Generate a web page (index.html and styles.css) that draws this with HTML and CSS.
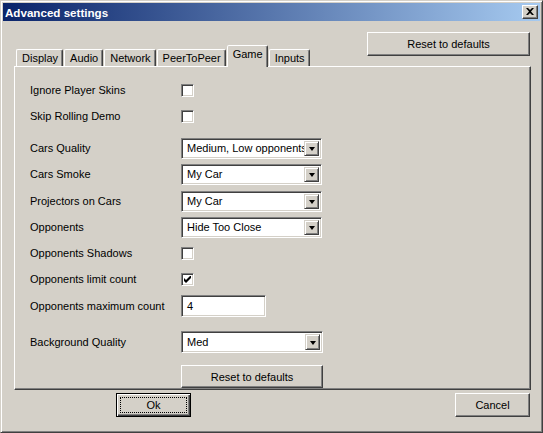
FILE: index.html
```html
<!DOCTYPE html>
<html>
<head>
<meta charset="utf-8">
<title>Advanced settings</title>
<link rel="stylesheet" href="styles.css">
</head>
<body>
<div class="window">
  <div class="titlebar">
    <span class="title">Advanced settings</span>
    <span class="close"><svg width="8" height="7" viewBox="0 0 8 7"><path d="M0 0h2l2 2 2-2h2L5 3.5 8 7H6L4 5 2 7H0l3-3.5z" fill="#000"/></svg></span>
  </div>
  <div class="content">
    <div class="header">
      <div class="tabs">
        <div class="tab">Display</div>
        <div class="tab">Audio</div>
        <div class="tab">Network</div>
        <div class="tab">PeerToPeer</div>
        <div class="tab active">Game</div>
        <div class="tab">Inputs</div>
      </div>
      <button class="btn reset-top">Reset to defaults</button>
    </div>
    <div class="panel">
      <div class="row"><span class="label">Ignore Player Skins</span><span class="check"></span></div>
      <div class="row"><span class="label">Skip Rolling Demo</span><span class="check"></span></div>
      <div class="row section"><span class="label">Cars Quality</span><span class="select"><span class="value">Medium, Low opponents</span><span class="arrow"></span></span></div>
      <div class="row"><span class="label">Cars Smoke</span><span class="select"><span class="value">My Car</span><span class="arrow"></span></span></div>
      <div class="row nudge"><span class="label">Projectors on Cars</span><span class="select"><span class="value">My Car</span><span class="arrow"></span></span></div>
      <div class="row"><span class="label">Opponents</span><span class="select"><span class="value">Hide Too Close</span><span class="arrow"></span></span></div>
      <div class="row"><span class="label">Opponents Shadows</span><span class="check"></span></div>
      <div class="row"><span class="label">Opponents limit count</span><span class="check checked"><svg width="7" height="7" viewBox="0 0 7 7"><path d="M0 2v3l2 2 5-5V-1L2 4z" fill="#000"/></svg></span></div>
      <div class="row nudge"><span class="label">Opponents maximum count</span><span class="textbox">4</span></div>
      <div class="row section-lg"><span class="label">Background Quality</span><span class="select wide"><span class="value">Med</span><span class="arrow"></span></span></div>
      <div class="row section-btn"><span class="label"></span><button class="btn reset-bottom">Reset to defaults</button></div>
    </div>
    <div class="footer">
      <button class="btn default"><span class="focus">Ok</span></button>
      <button class="btn cancel">Cancel</button>
    </div>
  </div>
</div>
</body>
</html>
```

FILE: styles.css
```css
* { box-sizing: border-box; }
html, body { margin: 0; padding: 0; }
body {
  background: #d4d0c8;
  font-family: "Liberation Sans", Arial, sans-serif;
  font-size: 11px;
  color: #000;
}
.window {
  width: 543px;
  height: 433px;
  background: #d4d0c8;
  border: 1px solid;
  border-color: #d4d0c8 #404040 #404040 #d4d0c8;
  box-shadow: inset 1px 1px #fff, inset -1px -1px #808080;
  padding: 2px;
  display: flex;
  flex-direction: column;
}
.titlebar {
  height: 18px;
  background: linear-gradient(to right, #0a246a, #a6caf0);
  display: flex;
  align-items: center;
  justify-content: space-between;
  padding: 0 2px 0 2px;
}
.title {
  color: #fff;
  font-weight: bold;
  font-size: 11.6px;
}
.close {
  width: 16px;
  height: 14px;
  background: #d4d0c8;
  border: 1px solid;
  border-color: #fff #404040 #404040 #fff;
  box-shadow: inset -1px -1px #808080;
  display: flex;
  align-items: center;
  justify-content: center;
  padding-bottom: 1px;
}
.content {
  flex: 1;
  padding: 0 9px 0 11px;
  display: flex;
  flex-direction: column;
}
.header {
  height: 45px;
  display: flex;
  justify-content: space-between;
  align-items: flex-end;
}
.tabs {
  display: flex;
  align-items: flex-end;
  padding-left: 2px;
}
.tab {
  height: 17px;
  padding: 2px 4px 0 5px;
  border: 1px solid;
  border-bottom: none;
  border-color: #fff #404040 transparent #fff;
  box-shadow: inset -1px 0 #808080;
  border-radius: 2px 2px 0 0;
  margin-right: 1px;
  line-height: 13px;
  white-space: nowrap;
}
.tab.active {
  height: 22px;
  margin-bottom: -1px;
  padding-top: 2px;
  position: relative;
  z-index: 1;
  background: #d4d0c8;
}
.btn {
  font-family: "Liberation Sans", Arial, sans-serif;
  font-size: 11px;
  color: #000;
  background: #d4d0c8;
  border: 1px solid;
  border-color: #fff #404040 #404040 #fff;
  box-shadow: inset -1px -1px #808080;
  padding: 0;
  margin: 0;
  display: flex;
  align-items: center;
  justify-content: center;
}
.reset-top {
  align-self: flex-start;
  margin-top: 11px;
  width: 163px;
  height: 24px;
  margin-right: 1px;
}
.panel {
  height: 324px;
  border: 1px solid;
  border-color: #fff #404040 #404040 #fff;
  box-shadow: inset -1px -1px #808080;
  padding: 12px 0 0 15px;
  display: flex;
  flex-direction: column;
  gap: 4px;
}
.row {
  height: 22px;
  display: flex;
  align-items: center;
  flex-shrink: 0;
}
.row.section { margin-top: 6px; }
.row.nudge { margin-top: 1px; }
.row.section-lg { margin-top: 10px; }
.row.section-btn { margin-top: 8px; height: 23px; }
.label {
  width: 151px;
  flex-shrink: 0;
  white-space: nowrap;
}
.check {
  width: 13px;
  height: 13px;
  background: #fff;
  border: 1px solid;
  border-color: #808080 #fff #fff #808080;
  box-shadow: inset 1px 1px #404040, inset -1px -1px #d4d0c8;
  display: flex;
  align-items: center;
  justify-content: center;
}
.select {
  width: 141px;
  height: 21px;
  background: #fff;
  border: 1px solid;
  border-color: #808080 #fff #fff #808080;
  box-shadow: inset 1px 1px #404040, inset -1px -1px #d4d0c8;
  display: flex;
  align-items: center;
  padding: 2px;
}
.select.wide { width: 142px; height: 22px; }
.value {
  flex: 1;
  overflow: hidden;
  white-space: nowrap;
  padding-left: 3px;
  line-height: 15px;
}
.arrow {
  width: 15px;
  height: 100%;
  background: #d4d0c8;
  border: 1px solid;
  border-color: #d4d0c8 #404040 #404040 #d4d0c8;
  box-shadow: inset 1px 1px #fff, inset -1px -1px #808080;
  display: flex;
  align-items: center;
  justify-content: center;
  flex-shrink: 0;
}
.arrow::after {
  content: "";
  width: 0;
  height: 0;
  border-left: 3.5px solid transparent;
  border-right: 3.5px solid transparent;
  border-top: 4px solid #000;
  margin-top: 1px;
}
.textbox {
  width: 85px;
  height: 22px;
  background: #fff;
  border: 1px solid;
  border-color: #808080 #fff #fff #808080;
  box-shadow: inset 1px 1px #404040, inset -1px -1px #d4d0c8;
  padding: 0 0 0 5px;
  display: flex;
  align-items: center;
}
.reset-bottom {
  width: 142px;
  height: 23px;
}
.footer {
  display: flex;
  justify-content: space-between;
  padding: 3px 1px 0 102px;
}
.footer .btn {
  width: 75px;
  height: 24px;
}
.btn.default {
  border: 1px solid #000;
  box-shadow: inset 1px 1px #fff, inset -1px -1px #404040, inset -2px -2px #808080;
  padding: 3px;
}
.focus {
  flex: 1;
  align-self: stretch;
  border: 1px dotted #000;
  display: flex;
  align-items: center;
  justify-content: center;
}
```
